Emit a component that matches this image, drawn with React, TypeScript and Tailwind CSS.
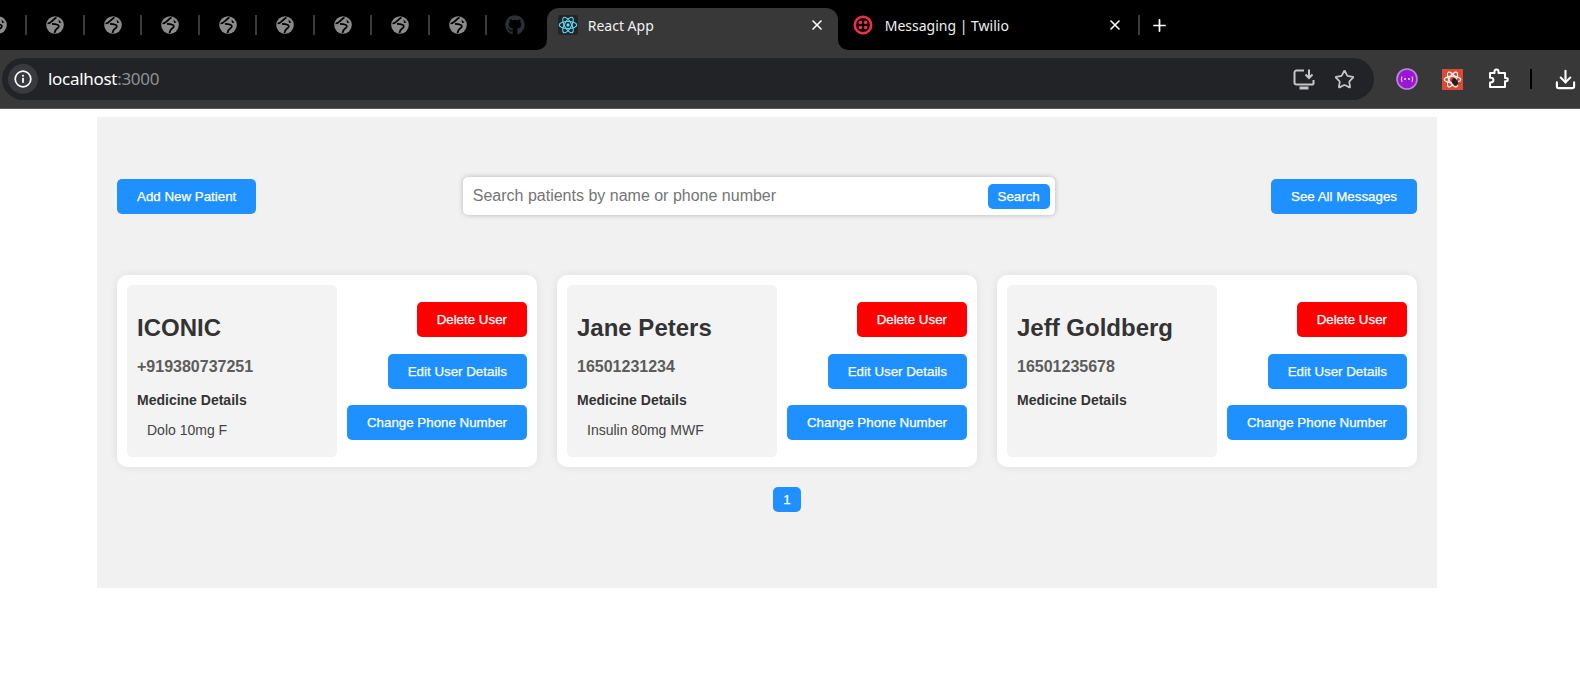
import { Download, Plus, Star, X } from 'lucide-react';
import { FaGithub } from 'react-icons/fa';

const chromeFont = "font-['Noto_Sans',sans-serif]";

function Globe() {
  return (
    <svg className="h-[18px] w-[18px] shrink-0" viewBox="0 0 18 18" fill="none">
      <circle cx="9" cy="9" r="8.8" fill="#8b8b8b" />
      <path d="M1.5 7.5C5.5 7.5 7 3 10.5 1.5" stroke="#000" strokeWidth="1.7" />
      <path d="M6 7.8c4 .2 8 1 6.5 3.4-1.5 1.800-3.500 1.600-4 5.800" stroke="#000" strokeWidth="1.7" />
      <path d="M12.500 3.500l3 3-2.500.4z" fill="#000" />
    </svg>
  );
}

function Sep() {
  return <div className="h-[20px] w-[2px] shrink-0 bg-[#3a3a3a]" />;
}

function ReactIcon({ color, size }: { color: string; size: number }) {
  return (
    <svg width={size} height={size} viewBox="-12 -12 24 24" fill="none" stroke={color} strokeWidth="1.3">
      <ellipse rx="10.5" ry="4.2" />
      <ellipse rx="10.5" ry="4.2" transform="rotate(60)" />
      <ellipse rx="10.5" ry="4.2" transform="rotate(120)" />
      <circle r="2" fill={color} stroke="none" />
    </svg>
  );
}

function TwilioIcon() {
  return (
    <svg width="20" height="20" viewBox="0 0 20 20">
      <circle cx="10" cy="10" r="8.2" fill="none" stroke="#f22f46" strokeWidth="2.6" />
      <circle cx="7.4" cy="7.4" r="1.8" fill="#f22f46" />
      <circle cx="12.6" cy="7.4" r="1.8" fill="#f22f46" />
      <circle cx="7.4" cy="12.6" r="1.8" fill="#f22f46" />
      <circle cx="12.6" cy="12.6" r="1.8" fill="#f22f46" />
    </svg>
  );
}

function TabStrip() {
  return (
    <div className={`flex h-[50px] items-center overflow-hidden bg-black ${chromeFont}`}>
      <div className="ml-[-11.5px] flex shrink-0 items-center gap-[18.75px]">
        {Array.from({ length: 9 }).map((_, i) => (
          <div key={i} className="flex items-center gap-[18.75px]">
            <Globe />
            <Sep />
          </div>
        ))}
      </div>
      <FaGithub className="ml-[18px] shrink-0 text-[20px] text-[#2c3034]" />

      {/* active tab */}
      <div className="relative ml-[21.5px] flex h-[42px] w-[291px] shrink-0 self-end rounded-t-[12px] bg-[#383838] pb-[8px] pl-[11px] pr-[13px]">
        <svg className="absolute bottom-0 left-[-10px]" width="10" height="10" viewBox="0 0 10 10">
          <path d="M10 0v10H0A10 10 0 0 0 10 0z" fill="#383838" />
        </svg>
        <svg className="absolute bottom-0 right-[-10px]" width="10" height="10" viewBox="0 0 10 10">
          <path d="M0 0v10h10A10 10 0 0 1 0 0z" fill="#383838" />
        </svg>
        <div className="flex w-full items-center">
          <div className="flex h-[20px] w-[20px] items-center justify-center rounded-[2px] bg-[#222426]">
            <ReactIcon color="#61dafb" size={20} />
          </div>
          <span className="ml-[10px] text-[14px] text-[#f1f1f1]">React App</span>
          <X className="ml-auto text-white" size={16} strokeWidth={2.4} />
        </div>
      </div>

      {/* inactive tab */}
      <div className="flex w-[300px] shrink-0 items-center pl-[15px] pr-[15px]">
        <TwilioIcon />
        <span className="ml-[12px] text-[14px] text-[#efefef]">Messaging | Twilio</span>
        <X className="ml-auto text-white" size={16} strokeWidth={2.4} />
      </div>
      <Sep />
      <Plus className="ml-[10px] shrink-0 text-white" size={19} strokeWidth={2.2} />
    </div>
  );
}

function Toolbar() {
  return (
    <div className={`flex h-[59px] items-center border-b border-[#5a5a5a] bg-[#383838] pl-[2px] ${chromeFont}`}>
      <div className="flex h-[42px] w-[1372px] shrink-0 items-center rounded-full bg-[#212327] pl-[6px] pr-[19px]">
        <div className="flex h-[30px] w-[30px] items-center justify-center rounded-full bg-[#383a3d]">
          <svg width="20" height="20" viewBox="0 0 20 20" fill="none">
            <circle cx="10" cy="10" r="7.8" stroke="#fff" strokeWidth="1.7" />
            <rect x="9.1" y="8.8" width="1.8" height="5" fill="#fff" />
            <rect x="9.1" y="5.8" width="1.8" height="1.8" fill="#fff" />
          </svg>
        </div>
        <span className="ml-[10px] text-[17px] tracking-[-0.3px] text-white">
          localhost<span className="text-[#8f9194]">:3000</span>
        </span>
        <svg className="ml-auto" width="24" height="24" viewBox="0 0 24 24" fill="none" stroke="#c4c7c5" strokeWidth="2">
          <path d="M12 3.5H4.500a2 2 0 0 0-2 2v10a2 2 0 0 0 2 2h16a1 1 0 0 0 1-1V13" />
          <path d="M7.500 21h9" strokeWidth="3" />
          <path d="M17 2.500v8M13.500 7.500l3.500 3.500 3.500-3.500" />
        </svg>
        <Star className="ml-[18px] text-[#c4c7c5]" size={21} strokeWidth={2} />
      </div>
      <svg className="ml-[22px] shrink-0" width="22" height="22" viewBox="0 0 22 22" fill="none">
        <circle cx="11" cy="11" r="10" fill="#9a17d6" stroke="#b98ad6" strokeWidth="1.6" />
        <path d="M6 8.500c-1 2-1 3.500 0 5.500M16 8.500c1 2 1 3.500 0 5.500" stroke="#e6c6f5" strokeWidth="1.2" />
        <path d="M8 11h2M12 11h2" stroke="#f3e2fb" strokeWidth="1.6" />
      </svg>
      <div className="ml-[24px] flex h-[21px] w-[21px] shrink-0 items-center justify-center bg-[#dc4a36]">
        <svg width="19" height="19" viewBox="-12 -12 24 24" fill="none" stroke="#fff" strokeWidth="1.4">
          <ellipse rx="10.500" ry="4.200" />
          <ellipse rx="10.500" ry="4.200" transform="rotate(60)" />
          <ellipse rx="10.500" ry="4.200" transform="rotate(120)" />
          <ellipse cx="3" cy="3" rx="3.500" ry="5" transform="rotate(-35 3 3)" fill="#222" stroke="none" />
        </svg>
      </div>
      <svg className="ml-[24px] shrink-0" width="22" height="22" viewBox="0 0 22 22" fill="none" stroke="#fff" strokeWidth="2" strokeLinejoin="round">
        <path d="M3 5h4.500V3.500a2 2 0 0 1 4 0V5H18v5h1.200a1.600 1.600 0 0 1 0 3.200H18V19H3v-4.500h1a2.400 2.400 0 0 0 0-4.800H3z" />
      </svg>
      <div className="ml-[21px] h-[20px] w-[2px] shrink-0 bg-black" />
      <Download className="ml-[22px] shrink-0 text-white" size={23} strokeWidth={2.2} />
    </div>
  );
}

function Btn({ label, red }: { label: string; red?: boolean }) {
  return (
    <button
      type="button"
      className={`rounded-[5px] px-[20px] py-[10px] text-[13.33px] leading-[15px] text-white [-webkit-text-stroke:0.25px_white] ${red ? 'bg-[#ff0000]' : 'bg-[#1e90ff]'}`}
    >
      {label}
    </button>
  );
}

const patients = [
  { name: 'ICONIC', phone: '+919380737251', medicine: 'Dolo 10mg F' },
  { name: 'Jane Peters', phone: '16501231234', medicine: 'Insulin 80mg MWF' },
  { name: 'Jeff Goldberg', phone: '16501235678', medicine: '' },
];

function PatientCard({ name, phone, medicine }: { name: string; phone: string; medicine: string }) {
  return (
    <div className="flex justify-between rounded-[10px] bg-white p-[10px] shadow-[0_0_8px_rgba(0,0,0,0.08)]">
      <div className="w-[210px] rounded-[5px] bg-[#f3f3f3] px-[10px] pb-[19px] pt-[29px]">
        <h2 className="text-[24px] font-bold leading-[28px] text-[#333]">{name}</h2>
        <p className="mt-[16px] text-[16px] font-bold leading-[18px] text-[#5c5c5c]">{phone}</p>
        <h4 className="mt-[16px] text-[14px] font-bold leading-[16px] text-[#333]">Medicine Details</h4>
        {medicine && <p className="mt-[14px] pl-[10px] text-[14px] leading-[16px] text-[#444]">{medicine}</p>}
      </div>
      <div className="flex flex-col items-end justify-center gap-[16.5px]">
        <Btn label="Delete User" red />
        <Btn label="Edit User Details" />
        <Btn label="Change Phone Number" />
      </div>
    </div>
  );
}

export default function App() {
  return (
    <div className="min-h-screen overflow-hidden bg-white font-['Liberation_Sans',Arial,sans-serif]">
      <TabStrip />
      <Toolbar />
      <main className="ml-[97px] mt-[8px] w-[1340px] bg-[#f1f1f1] px-[20px] pb-[76px] pt-[60px]">
        <div className="flex items-center">
          <Btn label="Add New Patient" />
          <div className="ml-[206.5px] flex h-[38px] w-[592px] items-center rounded-[5px] bg-white pl-[10px] pr-[5px] shadow-[0_0_5px_rgba(0,0,0,0.25)]">
            <input
              placeholder="Search patients by name or phone number"
              className="min-w-0 flex-1 bg-transparent text-[16px] outline-none placeholder:text-[#757575]"
            />
            <button type="button" className="rounded-[5px] bg-[#1e90ff] px-[10px] py-[5px] text-[13.33px] leading-[15px] text-white [-webkit-text-stroke:0.25px_white]">
              Search
            </button>
          </div>
          <div className="ml-auto">
            <Btn label="See All Messages" />
          </div>
        </div>
        <div className="mt-[60px] grid grid-cols-3 gap-[20px]">
          {patients.map((p) => (
            <PatientCard key={p.name} {...p} />
          ))}
        </div>
        <div className="mt-[20px] flex justify-center pl-[40px]">
          <button type="button" className="rounded-[5px] bg-[#1e90ff] px-[10px] py-[5px] text-[13.33px] leading-[15px] text-white [-webkit-text-stroke:0.25px_white]">
            1
          </button>
        </div>
      </main>
    </div>
  );
}
